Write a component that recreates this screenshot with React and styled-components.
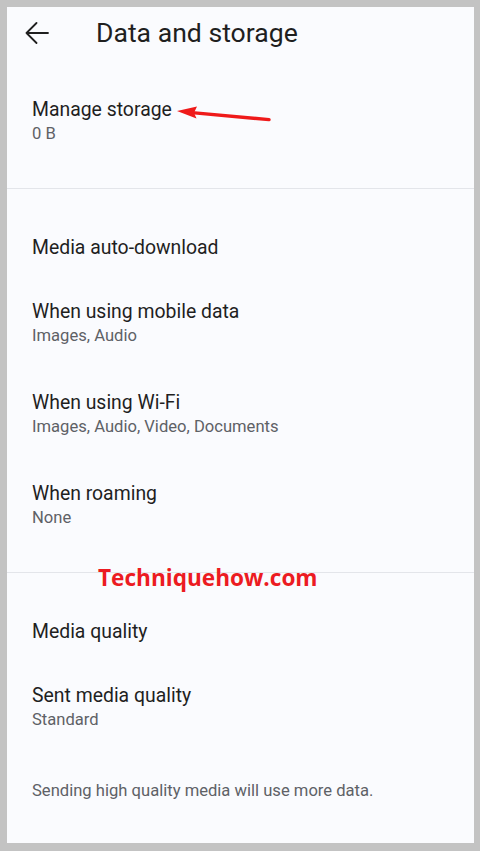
import React from "react";
import styled, { createGlobalStyle } from "styled-components";

const GlobalStyle = createGlobalStyle`
  html, body {
    margin: 0;
    padding: 0;
    background: #c3c3c3;
  }
  body {
    font-family: Roboto, "Noto Sans", Arial, sans-serif;
    -webkit-font-smoothing: antialiased;
  }
`;

const Frame = styled.div`
  box-sizing: border-box;
  width: 480px;
  height: 851px;
  padding: 7px 6px 8px 7px;
  background: #c3c3c3;
`;

const Panel = styled.div`
  position: relative;
  height: 100%;
  display: flex;
  flex-direction: column;
  background: #fafbfe;
  overflow: hidden;
`;

const Header = styled.header`
  display: flex;
  align-items: center;
  height: 52px;
  padding-left: 18px;
  gap: 47px;
`;

const BackButton = styled.button`
  display: flex;
  align-items: center;
  padding: 0;
  border: none;
  background: none;
  color: #1f1f1f;
  cursor: pointer;
`;

const Title = styled.h1`
  margin: 0;
  font-size: 26.6px;
  font-weight: 400;
  color: #1f1f1f;
  line-height: 32px;
`;

const Section = styled.section`
  display: flex;
  flex-direction: column;
  gap: ${(p) => p.gap || 0}px;
  padding: ${(p) => p.top || 0}px 25px ${(p) => p.bottom || 0}px;
`;

const Divider = styled.hr`
  margin: 0;
  border: none;
  height: 1px;
  background: #e3e5ea;
`;

const Item = styled.div`
  display: flex;
  flex-direction: column;
`;

const Label = styled.div`
  font-size: 19.4px;
  line-height: 24px;
  color: #1f1f1f;
`;

const Heading = styled(Label)`
  margin-bottom: ${(p) => p.pull || 0}px;
`;

const Sub = styled.div`
  font-size: 16.6px;
  line-height: 24px;
  color: #5e6166;
`;

const Note = styled.p`
  margin: 7px 0 0;
  font-size: 16.6px;
  line-height: 24px;
  color: #5e6166;
`;

const Annotation = styled.svg`
  position: absolute;
  left: 163px;
  top: 93px;
  pointer-events: none;
`;

const Watermark = styled.div`
  position: absolute;
  left: 91px;
  top: 556px;
  font-family: "Open Sans", "Noto Sans", sans-serif;
  font-weight: 700;
  font-size: 22.6px;
  line-height: 30px;
  color: #ec1b22;
  pointer-events: none;
`;

const Row = ({ label, sub }) => (
  <Item>
    <Label>{label}</Label>
    {sub && <Sub>{sub}</Sub>}
  </Item>
);

export default function App() {
  return (
    <>
      <GlobalStyle />
      <Frame>
        <Panel>
          <Header>
            <BackButton aria-label="Back">
              <svg width="24" height="22" viewBox="0 0 24 22" fill="none">
                <path
                  d="M1.5 11H23M11.5 1L1.5 11L11.5 21"
                  stroke="currentColor"
                  strokeWidth="1.8"
                  strokeLinecap="round"
                  strokeLinejoin="round"
                />
              </svg>
            </BackButton>
            <Title>Data and storage</Title>
          </Header>

          <Section top={39} bottom={42}>
            <Row label="Manage storage" sub="0 B" />
          </Section>
          <Divider />

          <Section top={47} bottom={42} gap={43}>
            <Heading pull={-3}>Media auto-download</Heading>
            <Row label="When using mobile data" sub="Images, Audio" />
            <Row label="When using Wi-Fi" sub="Images, Audio, Video, Documents" />
            <Row label="When roaming" sub="None" />
          </Section>
          <Divider />

          <Section top={47} gap={40}>
            <Row label="Media quality" />
            <Row label="Sent media quality" sub="Standard" />
            <Note>Sending high quality media will use more data.</Note>
          </Section>

          <Annotation width="110" height="30" viewBox="0 0 110 30">
            <path d="M22 12.6L99 19.6" stroke="#ef1a1a" strokeWidth="3.4" strokeLinecap="round" />
            <path d="M7 11L27 6.5L24 12.8L26.5 18.5Z" fill="#ef1a1a" />
          </Annotation>
          <Watermark>Techniquehow.com</Watermark>
        </Panel>
      </Frame>
    </>
  );
}
